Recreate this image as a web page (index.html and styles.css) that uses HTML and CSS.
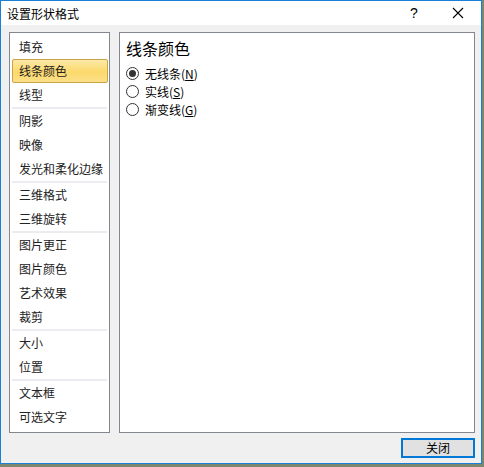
FILE: index.html
```html
<!DOCTYPE html>
<html>
<head>
<meta charset="utf-8">
<link rel="stylesheet" href="styles.css">
</head>
<body>
<div class="window">
  <div class="titlebar">
    <span class="title">设置形状格式</span>
    <span class="help">?</span>
    <span class="close">
      <svg width="12" height="12" viewBox="0 0 12 12"><path d="M1 1 L11 11 M11 1 L1 11" stroke="#000" stroke-width="1.1" fill="none"/></svg>
    </span>
  </div>
  <div class="body">
    <div class="panels">
      <ul class="nav">
        <li class="item">填充</li>
        <li class="item active">线条颜色</li>
        <li class="item">线型</li>
        <li class="sep"></li>
        <li class="item">阴影</li>
        <li class="item">映像</li>
        <li class="item">发光和柔化边缘</li>
        <li class="sep"></li>
        <li class="item">三维格式</li>
        <li class="item">三维旋转</li>
        <li class="sep"></li>
        <li class="item">图片更正</li>
        <li class="item">图片颜色</li>
        <li class="item">艺术效果</li>
        <li class="item">裁剪</li>
        <li class="sep"></li>
        <li class="item">大小</li>
        <li class="item">位置</li>
        <li class="sep"></li>
        <li class="item">文本框</li>
        <li class="item">可选文字</li>
      </ul>
      <div class="content">
        <div class="heading">线条颜色</div>
        <label class="radio"><span class="dot checked"></span>无线条(<u>N</u>)</label>
        <label class="radio"><span class="dot"></span>实线(<u>S</u>)</label>
        <label class="radio"><span class="dot"></span>渐变线(<u>G</u>)</label>
      </div>
    </div>
    <div class="footer">
      <button class="btn">关闭</button>
    </div>
  </div>
</div>
</body>
</html>
```

FILE: styles.css
```css
html, body {
  margin: 0;
  padding: 0;
}
body {
  width: 484px;
  height: 467px;
  background: #7d8770;
  font-family: "Noto Sans CJK SC", "Microsoft YaHei", sans-serif;
  font-size: 12px;
  color: #1a1a1a;
  overflow: hidden;
}
.window {
  box-sizing: border-box;
  width: 482px;
  height: 464px;
  border: 1px solid #1c7fd6;
  background: #f0f0f0;
  display: flex;
  flex-direction: column;
}
.titlebar {
  height: 24px;
  background: #ffffff;
  display: flex;
  align-items: center;
  flex-shrink: 0;
}
.title {
  margin-left: 6px;
  font-size: 12px;
  color: #000;
  flex: 1;
}
.help {
  font-family: "Liberation Sans", sans-serif;
  font-size: 14px;
  color: #000;
  width: 10px;
  margin-right: 32px;
}
.close {
  display: flex;
  width: 12px;
  height: 12px;
  margin-right: 17px;
}
.body {
  flex: 1;
  padding: 7px 6px 0 8px;
  display: flex;
  flex-direction: column;
}
.panels {
  display: flex;
  gap: 9px;
  height: 401px;
}
.nav {
  box-sizing: border-box;
  list-style: none;
  margin: 0;
  padding: 2px 1px 0 2px;
  width: 101px;
  height: 401px;
  border: 1px solid #828790;
  background: #fff;
}
.item {
  box-sizing: border-box;
  height: 24px;
  line-height: 22px;
  padding-left: 6px;
  border: 1px solid transparent;
  border-radius: 2px;
  white-space: nowrap;
  font-size: 12px;
  color: #222;
}
.item.active {
  border-color: #c9a549;
  background: linear-gradient(#fde9a8, #fcd96b 55%, #fbe08a);
}
.sep {
  height: 2px;
  margin: 0 1px 0 0;
  background: #ebebf0;
}
.content {
  box-sizing: border-box;
  flex: 1;
  height: 401px;
  border: 1px solid #828790;
  background: #fff;
  padding: 4px 6px;
  display: flex;
  flex-direction: column;
}
.heading {
  font-size: 16px;
  line-height: 22px;
  color: #000;
  margin-left: 0;
  margin-bottom: 5px;
}
.radio {
  display: flex;
  align-items: center;
  height: 18px;
  font-size: 12px;
  color: #000;
}
.radio u {
  text-decoration: underline;
}
.dot {
  box-sizing: border-box;
  width: 13px;
  height: 13px;
  border: 1px solid #333;
  border-radius: 50%;
  background: #fff;
  margin-right: 6px;
  display: flex;
  align-items: center;
  justify-content: center;
}
.dot.checked::after {
  content: "";
  width: 7px;
  height: 7px;
  border-radius: 50%;
  background: #333;
}
.footer {
  display: flex;
  justify-content: flex-end;
  padding-top: 5px;
}
.btn {
  box-sizing: border-box;
  width: 74px;
  height: 20px;
  border: 2px solid #0078d7;
  background: #e1e1e1;
  font-family: "Noto Sans CJK SC", sans-serif;
  font-size: 12px;
  color: #000;
  padding: 0;
  line-height: 16px;
}
```
